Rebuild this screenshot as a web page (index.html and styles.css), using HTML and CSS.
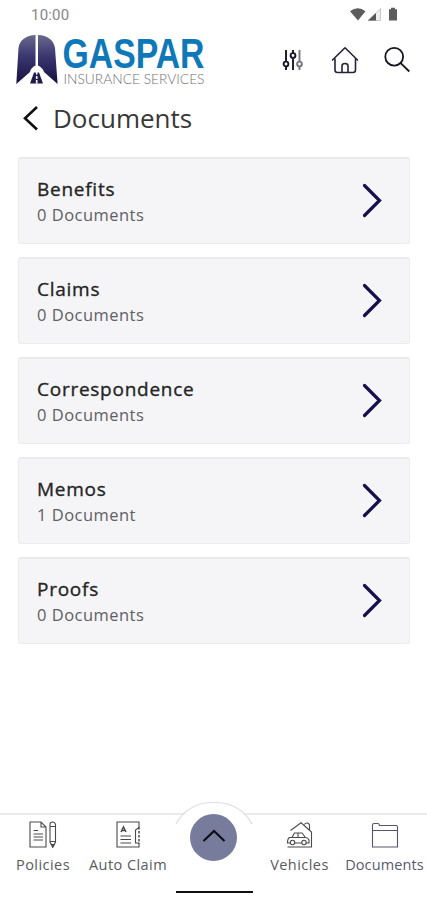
FILE: index.html
```
<!DOCTYPE html>
<html lang="en">
<head>
<meta charset="utf-8">
<title>Documents</title>
<link rel="stylesheet" href="styles.css">
</head>
<body>
<div class="status">
  <span class="time">10:00</span>
  <svg class="status-icons" width="50" height="16" viewBox="0 0 50 16">
    <path d="M0 4.300Q8 -1.800 15.500 4.300L8 13.500Z" fill="#5c5c5c"/>
    <path d="M18 13.500L30.500 1.500V13.500Z" fill="#eee" stroke="#aaa" stroke-width=".6"/>
    <path d="M18 13.500L26 6V13.500Z" fill="#555"/>
    <path d="M39 2.200h2V.8h4v1.400h2v11.300h-8z" fill="#5c5c5c"/>
  </svg>
</div>
<header class="header">
  <svg class="logo" width="194" height="56" viewBox="0 0 194 56">
    <defs>
      <linearGradient id="wing" x1="0" y1="0" x2="0" y2="1">
        <stop offset="0" stop-color="#69698c"/><stop offset=".45" stop-color="#39356f"/><stop offset="1" stop-color="#17103f"/>
      </linearGradient>
    </defs>
    <path d="M19.500 1C10 1.500 3.500 6 2.500 14L.3 50L14 38Q14.500 34 19.500 31.500Z" fill="url(#wing)"/>
    <path d="M22 1C31.500 1.500 38 6 39 14L41.600 50L28 38Q27 34 22 31.500Z" fill="url(#wing)"/>
    <path d="M18 38.500h5L27 49.500H14Z" fill="#211b4c"/>
    <path d="M20.700 38v2.500M20.700 42v3M20.700 46v3.500" stroke="#fff" stroke-width="1.600"/>
    <text class="brand" x="46.500" y="34.200" textLength="142" lengthAdjust="spacingAndGlyphs">GASPAR</text>
    <text class="brand-sub" x="47.500" y="49.500" textLength="141" lengthAdjust="spacingAndGlyphs">INSURANCE SERVICES</text>
  </svg>
  <div class="tools">
    <svg width="22" height="22" viewBox="0 0 22 22" fill="none" stroke="#17162a" stroke-width="1.900">
      <path d="M4 1v11M4 17.500V21M11 1v3M11 9.500V21"/><circle cx="4" cy="15" r="2.400"/><circle cx="11" cy="6.500" r="2.400"/>
      <g stroke="#77777c"><path d="M17.500 1v11M17.500 17.500V21"/><circle cx="17.500" cy="15" r="2.400"/></g>
    </svg>
    <svg width="28" height="28" viewBox="0 0 28 28" fill="none" stroke="#24233a" stroke-width="1.600" stroke-linejoin="round" stroke-linecap="round">
      <path d="M1.500 14L14 1.800L26.500 14M4 12.500V24Q4 26.500 6.500 26.500H22Q24.500 26.500 24.500 24V12.500M11 26V20Q11 17.500 14 17.500T17 20V26"/>
    </svg>
    <svg width="28" height="28" viewBox="0 0 28 28" fill="none" stroke="#151521" stroke-width="1.800">
      <circle cx="11.200" cy="10.700" r="8.900"/><path d="M17.700 17.200L26.300 25.500"/>
    </svg>
  </div>
</header>
<div class="title-row">
  <svg width="18" height="28" viewBox="0 0 18 28"><path d="M15 3L3 14.200L15 25.500" fill="none" stroke="#111" stroke-width="2.600"/></svg>
  <h1>Documents</h1>
</div>
<main class="list">
  <div class="card"><div><h2>Benefits</h2><p>0 Documents</p></div><svg class="chev" width="24" height="38" viewBox="0 0 24 38"><path d="M3.500 3.500L18.500 18.500L3.500 33.500"/></svg></div>
  <div class="card"><div><h2>Claims</h2><p>0 Documents</p></div><svg class="chev" width="24" height="38" viewBox="0 0 24 38"><path d="M3.500 3.500L18.500 18.500L3.500 33.500"/></svg></div>
  <div class="card"><div><h2>Correspondence</h2><p>0 Documents</p></div><svg class="chev" width="24" height="38" viewBox="0 0 24 38"><path d="M3.500 3.500L18.500 18.500L3.500 33.500"/></svg></div>
  <div class="card"><div><h2>Memos</h2><p>1 Document</p></div><svg class="chev" width="24" height="38" viewBox="0 0 24 38"><path d="M3.500 3.500L18.500 18.500L3.500 33.500"/></svg></div>
  <div class="card"><div><h2>Proofs</h2><p>0 Documents</p></div><svg class="chev" width="24" height="38" viewBox="0 0 24 38"><path d="M3.500 3.500L18.500 18.500L3.500 33.500"/></svg></div>
</main>
<nav class="nav">
  <a class="item"><svg width="30" height="30" viewBox="0 0 30 30">
    <path d="M2 2H13L18 7V27H2ZM13 2V7H18M5.500 10.500H10M5.500 14H15M5.500 17H15M5.500 20H15"/>
    <path d="M22 22V4.500Q22 2 24.500 2T27.500 4.500V22L24.800 27ZM22 6.500H27.500M22 21.500H27.500"/><path d="M23.500 24.500h2.600l-1.300 2.500z" fill="#333"/></svg><span>Policies</span></a>
  <a class="item"><svg width="30" height="30" viewBox="0 0 30 30">
    <path d="M26 7V2H4V27H26V23M26 7.500L22.500 10V23H26M7.500 16H18M7.500 19.500H18M7.500 23H18"/>
    <path d="M26 7V24" stroke-dasharray="2.500 1.500" stroke-width="1.500"/><path d="M8 12L10.500 7L13 12M9 10.500H12" stroke-width="1.500"/></svg><span>Auto Claim</span></a>
  <div class="middle">
    <svg class="arch" width="78" height="26" viewBox="0 0 78 26"><path d="M0 25C6 12 20 3 39 2S72 12 78 25Z" fill="#fff"/><path d="M1 23C8 10 21 1.500 39 1.500S70 10 77 23" fill="none" stroke="#dedede" stroke-width="1.200"/></svg>
    <div class="fab"><svg width="26" height="18" viewBox="0 0 26 18"><path d="M2.500 14L13 4L23.500 14" fill="none" stroke="#0b0b10" stroke-width="2"/></svg></div>
    <div class="handle"></div>
  </div>
  <a class="item"><svg width="30" height="30" viewBox="0 0 30 30">
    <path d="M5.500 10.500L16 2.800L26.500 12M19.500 4.500Q20 3 22 3T24.500 5V10M26.500 12V27H2.500M7 17.500L9.500 13H17L20.500 17.500M13 13V17.500M7 17.500H4.500Q2.500 18.500 2.500 23H24V20Q23 17.500 20.500 17.500Z"/>
    <circle cx="7.500" cy="22.500" r="2.200" fill="#fff"/><circle cx="19" cy="22.500" r="2.200" fill="#fff"/></svg><span>Vehicles</span></a>
  <a class="item blue"><svg width="30" height="30" viewBox="0 0 30 30">
    <path d="M2.500 27V5Q2.500 3.500 4 3.500H8Q9 3.500 9.500 5.500H26Q27.500 5.500 27.500 7V27ZM2.500 10.500H27.500"/></svg><span>Documents</span></a>
</nav>
</body>
</html>
```
FILE: styles.css
```
* { box-sizing: border-box; }
body {
  margin: 0;
  width: 427px;
  height: 900px;
  overflow: hidden;
  display: flex;
  flex-direction: column;
  background: #fff;
  font-family: "Open Sans", "Noto Sans", sans-serif;
}
svg { display: block; flex: none; overflow: visible; }
h1, h2, p { margin: 0; font-weight: 400; }
.status {
  height: 30px;
  padding: 7px 27px 0 31px;
  display: flex;
  justify-content: space-between;
}
.time { font: 15px/16px Roboto, sans-serif; color: #858585; letter-spacing: .2px; }
.status-icons { width: 50px; }
.header {
  height: 60px;
  padding: 4px 16px 0;
  display: flex;
  justify-content: space-between;
}
.brand { font: 700 42px "Liberation Sans", sans-serif; fill: #0e78b8; }
.brand-sub { font: 300 14px Lato, sans-serif; fill: #6f6f6f; }
.tools { display: flex; align-items: center; gap: 27px; height: 52px; }
.tools svg:last-child { margin-left: -3px; }
.title-row {
  height: 67px;
  padding: 14px 0 0 22px;
  display: flex;
  align-items: flex-start;
  gap: 13px;
}
.title-row h1 { margin-top: -1px; font-size: 26px; line-height: 30px; color: #383838; }
.list { padding: 0 17px 0 18px; display: flex; flex-direction: column; gap: 13.100px; }
.card {
  height: 87px;
  padding: 0 24px 0 18px;
  display: flex;
  align-items: center;
  justify-content: space-between;
  background: #f5f5f8;
  border: 1px solid #ececee;
  border-top: 2px solid #ebebec;
  border-radius: 3px;
}
.card h2 { font-size: 19px; line-height: 26px; letter-spacing: .74px; color: #252525; -webkit-text-stroke: .35px #252525; }
.card p { font-size: 16.500px; line-height: 25px; letter-spacing: .48px; color: #606063; }
.chev path { fill: none; stroke: #160f49; stroke-width: 3.200; stroke-linecap: round; }
.nav {
  margin-top: auto;
  height: 87px;
  border-top: 2px solid #ebebeb;
  display: grid;
  grid-template-columns: 86px 84px 88px 83px 86px;
}
.item {
  display: flex;
  flex-direction: column;
  align-items: center;
  padding-top: 5px;
  color: #5a5a5e;
  font-size: 14.500px;
  line-height: 20px;
  letter-spacing: .45px;
  white-space: nowrap;
}
.item span { margin-top: 5px; }
.item svg { fill: none; stroke: #4a4a4c; stroke-width: 1.100; }
.blue { color: #5a5a70; letter-spacing: .12px; padding-left: 1px; }
.blue svg { stroke: #555568; }
.middle { position: relative; }
.arch { position: absolute; left: 5px; top: -14px; }
.fab {
  position: absolute;
  left: 20px;
  top: -1px;
  width: 47px;
  height: 47px;
  border-radius: 50%;
  background: #777b9c;
  display: flex;
  align-items: center;
  justify-content: center;
  padding-bottom: 4px;
}
.handle { position: absolute; left: 6px; top: 76px; width: 77px; height: 2px; background: #111; }
```
